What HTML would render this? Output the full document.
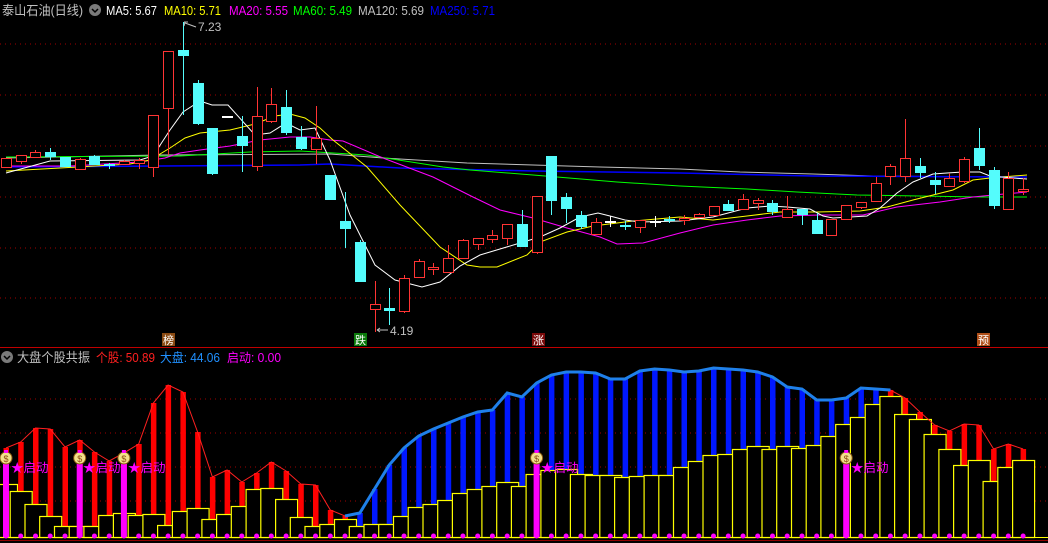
<!DOCTYPE html>
<html><head><meta charset="utf-8"><style>
html,body{margin:0;padding:0;background:#000;overflow:hidden}
svg{display:block}
text{font-family:"Liberation Sans","Noto Sans CJK SC",sans-serif}
</style></head><body>
<svg id="s" width="1048" height="543" viewBox="0 0 1048 543" xmlns="http://www.w3.org/2000/svg">
<rect width="1048" height="543" fill="#000"/>
<g id="g"></g>
<g id="labels">
<circle cx="95" cy="10" r="6" fill="#7a7a7a"/><path d="M92 9 L95 12 L98 9" stroke="#000" stroke-width="1.5" fill="none"/>
<text x="2" y="15" font-size="13" fill="#c0c0c0" textLength="81" lengthAdjust="spacingAndGlyphs">泰山石油(日线)</text>
<text x="106" y="15" font-size="12.5" fill="#ffffff" textLength="51" lengthAdjust="spacingAndGlyphs">MA5: 5.67</text>
<text x="164" y="15" font-size="12.5" fill="#ffff00" textLength="57" lengthAdjust="spacingAndGlyphs">MA10: 5.71</text>
<text x="229" y="15" font-size="12.5" fill="#ff00ff" textLength="59" lengthAdjust="spacingAndGlyphs">MA20: 5.55</text>
<text x="293" y="15" font-size="12.5" fill="#00ff00" textLength="59" lengthAdjust="spacingAndGlyphs">MA60: 5.49</text>
<text x="358" y="15" font-size="12.5" fill="#c0c0c0" textLength="66" lengthAdjust="spacingAndGlyphs">MA120: 5.69</text>
<text x="430" y="15" font-size="12.5" fill="#0000ff" textLength="65" lengthAdjust="spacingAndGlyphs">MA250: 5.71</text>
<path d="M185 22 L184 26 M184 22 L188 22 M185 23 L196 27" stroke="#c0c0c0" fill="none"/>
<text x="198" y="31" font-size="12" fill="#c0c0c0">7.23</text>
<path d="M377 330 L388 330 M377 330 L380 328 M377 330 L380 332" stroke="#c0c0c0" fill="none"/>
<text x="390" y="335" font-size="12" fill="#c0c0c0">4.19</text>
<rect x="162" y="333" width="13" height="13" fill="#8a4a12"/><text x="163" y="344" font-size="11" fill="#fff">榜</text>
<rect x="354" y="333" width="13" height="13" fill="#0a7a0a"/><text x="355" y="344" font-size="11" fill="#fff">跌</text>
<rect x="532" y="333" width="13" height="13" fill="#7a0a0a"/><text x="533" y="344" font-size="11" fill="#fff">涨</text>
<rect x="977" y="333" width="13" height="13" fill="#b0501a"/><text x="978" y="344" font-size="11" fill="#fff">预</text>
<circle cx="7" cy="357" r="6" fill="#7a7a7a"/><path d="M4 356 L7 359 L10 356" stroke="#000" stroke-width="1.5" fill="none"/>
<text x="17" y="362" font-size="13" fill="#c0c0c0" textLength="73" lengthAdjust="spacingAndGlyphs">大盘个股共振</text>
<text x="96" y="362" font-size="12.5" fill="#ff2020" textLength="59" lengthAdjust="spacingAndGlyphs">个股: 50.89</text>
<text x="160" y="362" font-size="12.5" fill="#2090ff" textLength="60" lengthAdjust="spacingAndGlyphs">大盘: 44.06</text>
<text x="227" y="362" font-size="12.5" fill="#ff00ff" textLength="54" lengthAdjust="spacingAndGlyphs">启动: 0.00</text>
<text x="11" y="472" font-size="12.5" fill="#ff00ff">★启动</text>
<text x="83" y="472" font-size="12.5" fill="#ff00ff">★启动</text>
<text x="128" y="472" font-size="12.5" fill="#ff00ff">★启动</text>
<text x="541" y="472" font-size="12.5" fill="#ff00ff">★启动</text>
<text x="851" y="472" font-size="12.5" fill="#ff00ff">★启动</text>
</g>
</svg>
<script>
var X=function(i){return 6+14.74*i;};
var h='';
[44,95,146,197,248,298].forEach(function(y){h+='<line x1="0" x2="1048" y1="'+y+'" y2="'+y+'" stroke="#a00000" stroke-dasharray="1 4"/>';});
[399,433,467,501].forEach(function(y){h+='<line x1="0" x2="1048" y1="'+y+'" y2="'+y+'" stroke="#a00000" stroke-dasharray="1 4"/>';});
h+='<line x1="0" x2="1048" y1="347.5" y2="347.5" stroke="#c00000"/>';
h+='<line x1="0" x2="1048" y1="540.5" y2="540.5" stroke="#900000"/>';
function pl(p,c,w){h+='<polyline fill="none" stroke="'+c+'" stroke-width="'+(w||1)+'" points="'+p+'"/>';}
pl('6,158 160,155 330,154 383,158 467,163 533,165 600,167 680,169 740,172 813,174 873,176 980,177 1027,177','#c0c0c0');
pl('6,167 160,166 300,165 330,164 400,168 533,171 680,173 813,176 1027,177','#0000ff',1.5);
pl('6,157 180,156 250,152 300,151 367,155 443,167 470,170 533,175 617,182 680,186 747,189 797,192 857,195 980,197 1027,197','#00ff00');
pl('6,166 70,166 140,162 165,158 180,153 200,150 230,146 260,140 290,137 310,137 330,140 343,141 383,158 433,177 473,197 500,210 533,218 567,228 600,237 617,244 643,243 680,233 713,225 747,220 780,216 820,215 863,215 897,207 940,202 973,197 993,195 1027,192','#ff00ff');
pl('6,171 60,168 130,164 150,160 170,148 185,138 200,133 230,130 255,124 275,116 290,114 305,118 320,128 333,140 367,167 400,205 440,247 467,265 480,267 497,267 527,255 540,242 567,232 593,226 633,221 680,217 713,220 747,216 780,212 817,212 860,211 887,207 913,200 933,195 953,190 973,180 990,178 1027,175','#ffff00');
pl('6,173 50,161 140,160 153,156 170,130 183,112 200,101 212,105 228,105 255,135 270,133 286,123 300,130 315,128 330,160 350,215 375,265 395,280 422,287 440,282 460,266 480,255 500,249 520,243 540,237 560,228 580,217 598,213 610,216 625,220 640,222 680,221 713,217 747,208 770,206 787,207 810,209 823,216 833,218 867,216 880,208 897,193 913,182 933,174 947,173 963,172 980,172 990,176 1013,178 1027,179','#ffffff');
var C=[[158,167,158,167,'r'],[155,161,155,164,'r'],[152,157,150,157,'r'],[152,157,148,160,'c'],[157,167,157,167,'c'],[159,169,158,170,'r'],[156,165,155,165,'c'],[164,166,163,169,'c'],[161,164,160,165,'r'],[160,163,158,169,'r'],
[115,167,115,177,'r'],[51,108,51,155,'r'],[50,56,22,115,'c'],[83,124,80,125,'c'],[128,174,128,175,'c'],[116,117,116,117,'w'],[136,146,116,172,'c'],[116,166,87,171,'r'],[104,121,88,123,'r'],[107,133,90,135,'c'],
[137,149,126,150,'c'],[138,149,106,164,'r'],[175,200,175,200,'c'],[221,229,192,248,'c'],[242,282,240,282,'c'],[304,309,281,332,'r'],[308,311,288,325,'c'],[278,311,275,313,'r'],[261,277,259,277,'r'],[267,269,263,275,'r'],
[258,272,245,272,'r'],[240,258,239,258,'r'],[238,244,238,250,'r'],[235,239,230,243,'r'],[224,238,224,245,'r'],[224,247,210,247,'c'],[196,252,196,254,'r'],[156,201,156,215,'c'],[197,209,193,223,'c'],[215,227,211,229,'c'],
[222,234,218,234,'r'],[221,222,216,227,'w'],[225,226,221,230,'c'],[220,227,220,233,'r'],[221,222,216,227,'w'],[219,220,216,223,'c'],[218,220,215,225,'r'],[214,217,213,218,'r'],[206,215,206,215,'r'],[204,211,200,211,'c'],
[199,209,194,209,'r'],[200,203,198,210,'r'],[203,212,200,215,'c'],[209,217,196,217,'r'],[209,215,209,225,'c'],[220,234,213,234,'c'],[219,235,219,235,'r'],[205,219,205,219,'r'],[202,207,202,209,'r'],[183,201,177,201,'r'],
[166,176,164,185,'r'],[158,176,119,182,'r'],[166,173,158,178,'c'],[180,185,172,194,'c'],[178,186,173,186,'r'],[159,181,157,183,'r'],[148,166,128,170,'c'],[170,206,167,209,'c'],[178,209,172,210,'r'],[189,191,178,195,'r']];
C.forEach(function(c,i){var x=Math.round(X(i));
 var col=c[4]=='r'?'#ff3434':(c[4]=='c'?'#54fcfc':'#ffffff');
 h+='<line x1="'+(x+.5)+'" x2="'+(x+.5)+'" y1="'+c[2]+'" y2="'+c[3]+'" stroke="'+col+'"/>';
 if(c[4]=='r'){h+='<rect x="'+(x-4.5)+'" y="'+(c[0]+.5)+'" width="10" height="'+Math.max(1,c[1]-c[0])+'" fill="#000" stroke="'+col+'"/>';}
 else {h+='<rect x="'+(x-5)+'" y="'+c[0]+'" width="11" height="'+Math.max(2,c[1]-c[0])+'" fill="'+col+'"/>';}
});
var V=[448,442,428,429,447,440,452,461,453,444,403,385,392,432,477,470,482,473,462,471,484,485,510,516,513,489,465,448,436,429,423,417,412,410,393,
397,383,375,372,372,373,379,379,371,369,370,372,371,368,369,370,372,377,387,389,400,400,398,388,389,390,398,412,425,431,424,425,449,444,449];
var B=[484,491,504,516,526,526,526,515,513,515,514,525,511,508,519,514,506,489,488,499,517,526,524,519,526,524,524,516,507,504,500,493,489,486,482,486,
474,470,469,474,475,475,477,476,475,475,467,461,455,454,449,446,449,446,448,445,436,424,417,404,396,414,419,434,449,465,460,481,467,460];
var base=537;
function isBlue(i){return i>=24&&i<=59;}
var rp1=[],bp=[],rp2=[];
V.forEach(function(v,i){var p=X(i).toFixed(1)+','+v; if(i<=24)rp1.push(p); if(i>=23&&i<=60)bp.push(p); if(i>=59)rp2.push(p);});
for(var i=0;i<70;i++){
 var x=X(i);
 h+='<rect x="'+(x-2.5).toFixed(1)+'" y="'+V[i]+'" width="5.5" height="'+(base-V[i])+'" fill="'+(isBlue(i)?'#0018ff':'#ff0000')+'"/>';
 h+='<rect x="'+(x-10.5).toFixed(1)+'" y="'+(B[i]+.5)+'" width="22" height="'+(base-B[i])+'" fill="#000" stroke="#ffff00" stroke-width="1.2"/>';
}
h+='<polyline fill="none" stroke="#ff2020" stroke-width="1" points="'+rp1.join(' ')+'"/>';
h+='<polyline fill="none" stroke="#ff2020" stroke-width="1" points="'+rp2.join(' ')+'"/>';
h+='<polyline fill="none" stroke="#1f80ea" stroke-width="3" points="'+bp.join(' ')+'"/>';
h+='<line x1="0" x2="1048" y1="537.5" y2="537.5" stroke="#ffff00"/>';
[0,5,8,36,57].forEach(function(i){var x=X(i);
 h+='<rect x="'+(x-3).toFixed(1)+'" y="464" width="6" height="'+(base-464)+'" fill="#ff00ff"/>';
 h+='<circle cx="'+x.toFixed(1)+'" cy="458" r="6" fill="#f2e08a" stroke="#8a5a10"/>';
 h+='<rect x="'+(x-2).toFixed(1)+'" y="450" width="4" height="3" fill="#ff00ff"/>';
 h+='<text x="'+x.toFixed(1)+'" y="462" font-size="9" text-anchor="middle" fill="#8a4a10" font-family="Liberation Sans">$</text>';
});
for(var i=0;i<70;i++){h+='<circle cx="'+X(i).toFixed(1)+'" cy="536" r="2.5" fill="#ff00ff"/>';}
document.getElementById('g').innerHTML=h;
</script>
</body></html>
